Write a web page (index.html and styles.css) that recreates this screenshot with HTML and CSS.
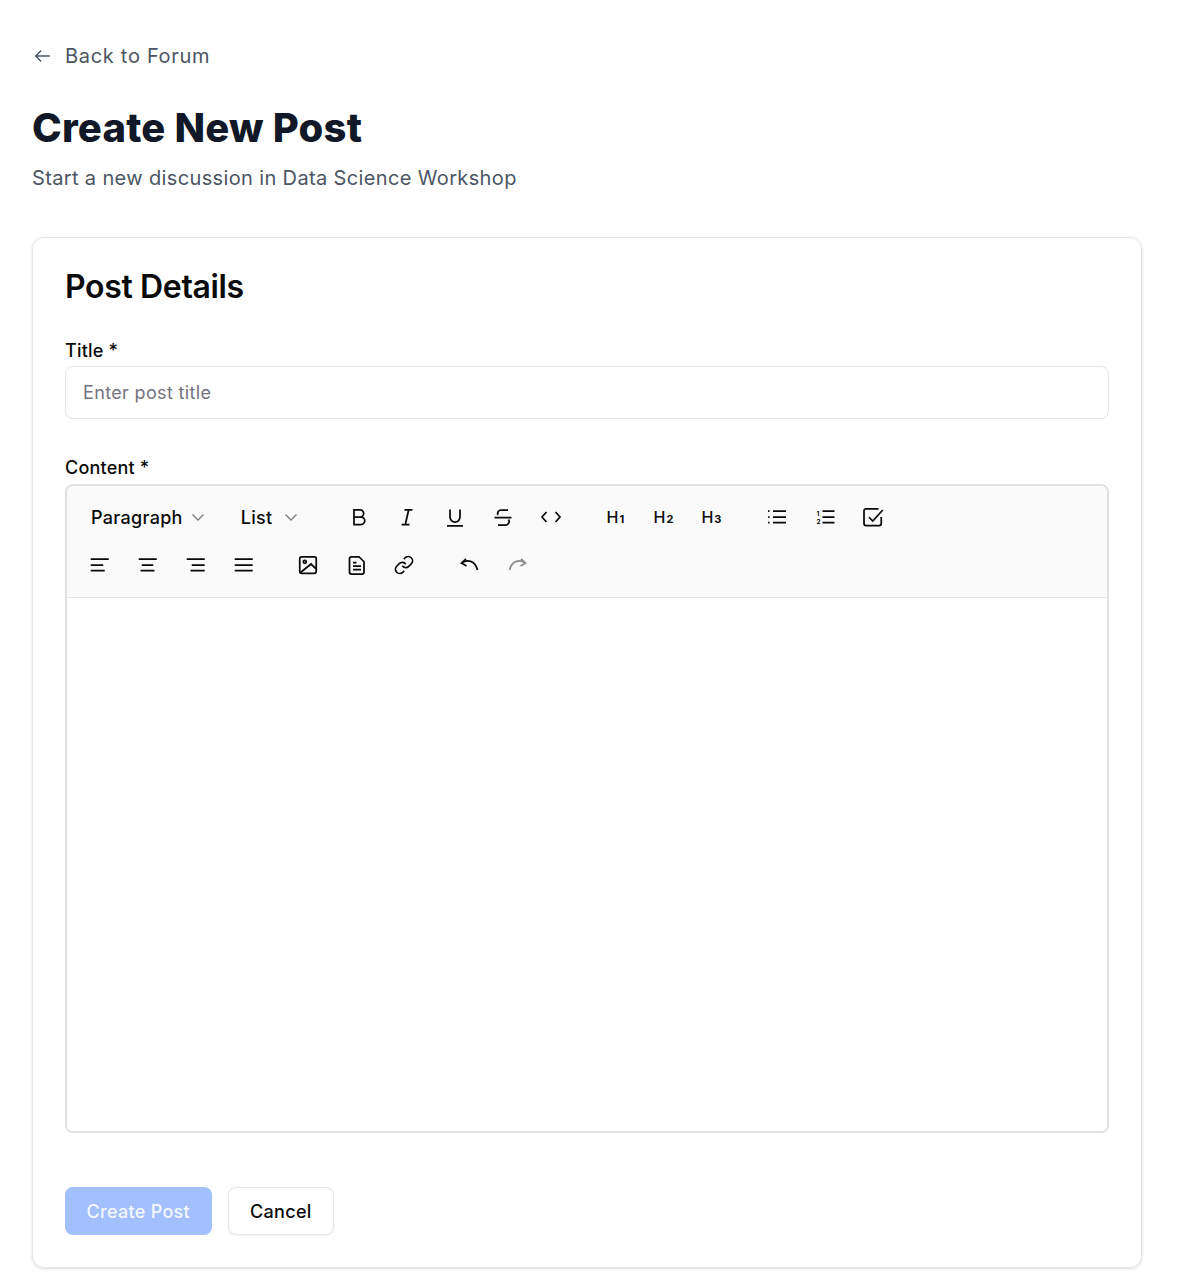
FILE: index.html
```html
<!DOCTYPE html>
<html lang="en">
<head>
    <meta charset="UTF-8">
    <meta name="viewport" content="width=device-width, initial-scale=1.0">
    <title>Create New Post</title>
    <link rel="stylesheet" href="styles.css">
</head>
<body>
    <main class="page">
        <a class="back-link" href="#">
            <svg class="back-icon" viewBox="0 0 24 24"><path d="M21.500 12H5M11 5.500 4.500 12l6.500 6.500"/></svg>
            <span>Back to Forum</span>
        </a>

        <h1 class="page-title">Create New Post</h1>
        <p class="page-subtitle">Start a new discussion in Data Science Workshop</p>

        <section class="card">
            <h2 class="card-title">Post Details</h2>

            <label class="field-label" for="title">Title *</label>
            <input class="text-input" id="title" type="text" placeholder="Enter post title">

            <div class="field-label content-label">Content *</div>
            <div class="editor">
                <div class="toolbar">
                    <div class="toolbar-row">
                        <div class="tool-group select-group">
                            <button class="select-btn">Paragraph <svg class="chevron" viewBox="0 0 16 16"><path d="M2.500 5.500 8 11l5.500-5.500"/></svg></button>
                            <button class="select-btn select-list">List <svg class="chevron" viewBox="0 0 16 16"><path d="M2.500 5.500 8 11l5.500-5.500"/></svg></button>
                        </div>
                        <div class="tool-group">
                            <button class="tool-btn"><svg viewBox="0 0 24 24"><path d="M7 4.750h6a3.600 3.600 0 0 1 0 7.250H7zM7 12h7a3.750 3.750 0 0 1 0 7.500H7z"/></svg></button>
                            <button class="tool-btn"><svg viewBox="0 0 24 24"><path d="M9.500 4.750h8M6.500 19.500h8M13.700 4.750l-3.400 14.750"/></svg></button>
                            <button class="tool-btn"><svg viewBox="0 0 24 24"><path d="M7 4.500V12a5 5 0 0 0 10 0V4.500M4 20.750h16"/></svg></button>
                            <button class="tool-btn"><svg viewBox="0 0 24 24"><path d="M3.500 12.500h17M17 5H10a3.500 3.500 0 0 0-3 5M7 20h7.500a3.500 3.500 0 0 0 3-5.500"/></svg></button>
                            <button class="tool-btn"><svg viewBox="0 0 24 24"><path d="M7.500 7 3 12l4.500 5M16.500 7l4.500 5-4.500 5"/></svg></button>
                        </div>
                        <div class="tool-group">
                            <button class="tool-btn heading-btn">H<span>1</span></button>
                            <button class="tool-btn heading-btn">H<span>2</span></button>
                            <button class="tool-btn heading-btn">H<span>3</span></button>
                        </div>
                        <div class="tool-group list-group">
                            <button class="tool-btn"><svg viewBox="0 0 24 24"><path d="M8 6h13M8 12h13M8 17.500h13M3 6h1.500M3 12h1.500M3 17.500h1.500"/></svg></button>
                            <button class="tool-btn"><svg viewBox="0 0 24 24"><path d="M9.500 6h12M9.500 12h12M9.500 17.500h12"/><text class="num" x="3.500" y="10.500">1</text><text class="num" x="3.500" y="18.500">2</text></svg></button>
                            <button class="tool-btn"><svg viewBox="0 0 24 24"><path d="M20.250 12v6.500a2 2 0 0 1-2 2H5a2 2 0 0 1-2-2V5.750a2 2 0 0 1 2-2h12.500M8 12.250l3.750 3.750L21.750 5"/></svg></button>
                        </div>
                    </div>
                    <div class="toolbar-row row-bottom">
                        <div class="tool-group">
                            <button class="tool-btn"><svg viewBox="0 0 24 24"><path d="M3.750 6h18M3.750 12h12.500M3.750 17.500h14"/></svg></button>
                            <button class="tool-btn"><svg viewBox="0 0 24 24"><path d="M3.750 6h18M6.750 12h11.500M5.500 17.500h14"/></svg></button>
                            <button class="tool-btn"><svg viewBox="0 0 24 24"><path d="M3.750 6h18M8.750 12h13M7.500 17.500h14.250"/></svg></button>
                            <button class="tool-btn"><svg viewBox="0 0 24 24"><path d="M3.750 6h18M3.750 12h18M3.750 17.500h18"/></svg></button>
                        </div>
                        <div class="tool-group">
                            <button class="tool-btn"><svg viewBox="0 0 24 24"><rect x="3.750" y="3.750" width="16.500" height="16.500" rx="2"/><circle cx="8.750" cy="8.750" r="1.500"/><path d="M4.500 19.500 15 11l5.250 5"/></svg></button>
                            <button class="tool-btn"><svg viewBox="0 0 24 24"><path d="M7.500 3.750h7.500l5 5V19a2 2 0 0 1-2 2H7.500a2 2 0 0 1-2-2V5.750a2 2 0 0 1 2-2zM9 9.500h3.500M9 13h8M9 16.500h8"/></svg></button>
                            <button class="tool-btn link-btn"><svg viewBox="-2 -2 28 28"><path d="M10 13a5 5 0 0 0 7.540.54l3-3a5 5 0 0 0-7.070-7.070l-1.720 1.710"/><path d="M14 11a5 5 0 0 0-7.540-.54l-3 3a5 5 0 0 0 7.070 7.070l1.710-1.710"/></svg></button>
                        </div>
                        <div class="tool-group">
                            <button class="tool-btn"><svg viewBox="0 0 24 24"><path d="M9 6 4.500 10 9.500 13M4.500 10c5.500-3.500 13.500-3 16 7"/></svg></button>
                            <button class="tool-btn tool-disabled"><svg viewBox="0 0 24 24"><path d="M16 6l4.500 4-5 3M20.500 10C15 6.500 7 7 4.500 17"/></svg></button>
                        </div>
                    </div>
                </div>
                <div class="editor-body"></div>
            </div>

            <div class="form-actions">
                <button class="btn btn-primary">Create Post</button>
                <button class="btn btn-outline">Cancel</button>
            </div>
        </section>
    </main>
</body>
</html>
```

FILE: styles.css
```css
* {
    box-sizing: border-box;
}
body {
    font-family: Inter, "Noto Sans", sans-serif;
    margin: 0;
    padding: 0;
    background-color: white;
    color: #0a0a0a;
}
.page {
    padding: 32px 50px 6px 32px;
}
.back-link {
    display: flex;
    align-items: center;
    gap: 13px;
    height: 48px;
    color: #4b5563;
    font-size: 20px;
    letter-spacing: 0.7px;
    text-decoration: none;
}
.back-icon {
    width: 20px;
    height: 20px;
    fill: none;
    stroke: #4b5563;
    stroke-width: 1.7;
}
.page-title {
    margin: 24px 0 0;
    font-size: 40px;
    line-height: 48px;
    font-weight: 800;
    letter-spacing: 0.2px;
    color: #111827;
}
.page-subtitle {
    margin: 12px 0 0;
    font-size: 20px;
    line-height: 28px;
    letter-spacing: 0.36px;
    color: #4b5563;
}
.card {
    margin-top: 45px;
    height: 1031px;
    padding: 32px;
    border: 1px solid #e5e5e5;
    border-radius: 12px;
    box-shadow: 0 1px 3px rgba(0, 0, 0, 0.14);
}
.card-title {
    margin: 1px 0 34px;
    font-size: 32px;
    line-height: 32px;
    font-weight: 600;
    letter-spacing: -0.35px;
}
.field-label {
    display: block;
    font-size: 18px;
    line-height: 28px;
    font-weight: 500;
    letter-spacing: 0.2px;
}
.text-input {
    display: block;
    width: 100%;
    height: 53px;
    margin-top: 1px;
    padding: 0 17px;
    border: 1px solid #e5e5e5;
    border-radius: 8px;
    font-family: inherit;
    font-size: 18px;
    letter-spacing: 0.35px;
}
.text-input::placeholder {
    color: #737380;
}
.content-label {
    margin-top: 35px;
}
.editor {
    margin-top: 2px;
    height: 649px;
    border: 2px solid #e0e0e0;
    border-radius: 8px;
    overflow: hidden;
}
.toolbar {
    height: 112px;
    padding: 7px 16px 8px;
    background-color: #fafafa;
    border-bottom: 1px solid #e5e5e5;
}
.toolbar-row {
    display: flex;
    gap: 32px;
    height: 48px;
    align-items: center;
}
.row-bottom {
    gap: 33px;
}
.tool-group {
    display: flex;
    gap: 16px;
    align-items: center;
}
.select-group {
    gap: 15px;
    margin-right: 2px;
}
.list-group {
    margin-left: 2px;
}
button {
    font-family: inherit;
    background: none;
    border: none;
    padding: 0;
    color: #0a0a0a;
}
.select-btn {
    display: flex;
    align-items: center;
    gap: 7px;
    height: 32px;
    padding: 0 12px 0 8px;
    font-size: 18px;
    font-weight: 500;
    letter-spacing: 0.3px;
}
.select-list {
    gap: 11px;
    padding-right: 10px;
}
.chevron {
    width: 16px;
    height: 16px;
    fill: none;
    stroke: #808080;
    stroke-width: 1.4;
}
.tool-btn {
    width: 32px;
    height: 32px;
    display: flex;
    align-items: center;
    justify-content: center;
}
.tool-btn svg {
    width: 24px;
    height: 24px;
    fill: none;
    stroke: #0a0a0a;
    stroke-width: 1.75;
}
.link-btn svg {
    stroke-width: 2;
}
.tool-disabled svg {
    stroke: #8c8c8c;
}
.num {
    font-size: 6.5px;
    font-weight: 700;
    fill: #0a0a0a;
    stroke: none;
}
.heading-btn {
    font-size: 16px;
    font-weight: 500;
    align-items: baseline;
    padding-top: 6px;
}
.heading-btn span {
    font-size: 11px;
    font-weight: 700;
    margin-left: 1px;
}
.editor-body {
    height: 533px;
    background-color: white;
}
.form-actions {
    display: flex;
    gap: 16px;
    margin-top: 54px;
}
.btn {
    height: 48px;
    padding: 0 21.5px;
    border-radius: 8px;
    font-size: 18px;
    font-weight: 500;
    letter-spacing: 0.3px;
}
.btn-primary {
    background-color: #a2bffe;
    color: #f4f7ff;
}
.btn-outline {
    background-color: white;
    border: 1px solid #e5e5e5;
    box-shadow: 0 1px 2px rgba(0, 0, 0, 0.05);
}
```
